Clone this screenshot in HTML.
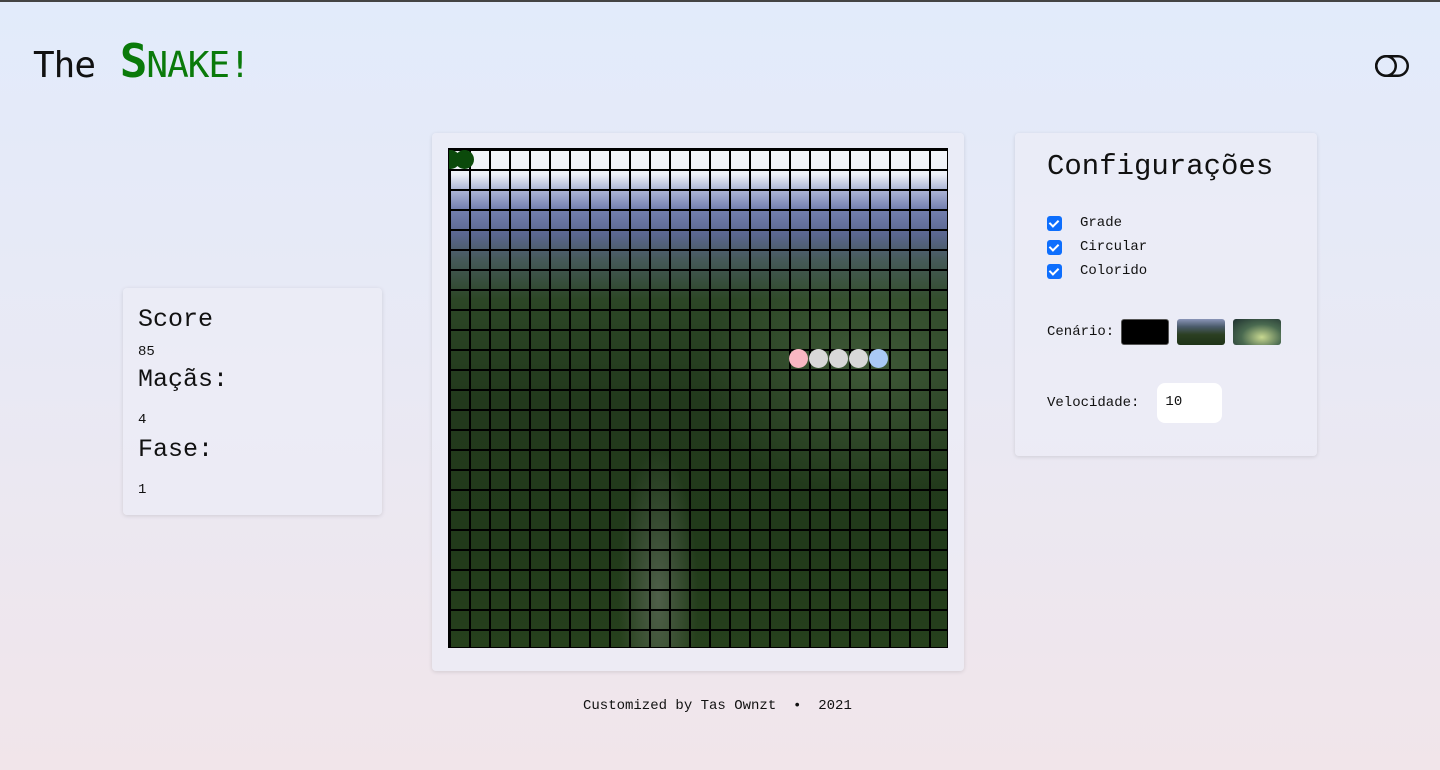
<!DOCTYPE html>
<html><head><meta charset="utf-8">
<style>
*{box-sizing:border-box;margin:0;padding:0}
html,body{width:1440px;height:770px;overflow:hidden}
body{background:linear-gradient(180deg,#e2ebfb 0%,#e9e9f4 50%,#f1e5ea 100%);font-family:"Liberation Mono","DejaVu Sans Mono",monospace;color:#111;position:relative;border-top:2px solid #444}
.title{position:absolute;left:33px;top:32px;font-size:36px;font-family:"DejaVu Sans Mono","Liberation Mono",monospace;letter-spacing:-1px}
.title .g{color:#0a7a0a;margin-left:4px}
.title .big{font-size:46px;font-weight:bold}
.toggle{position:absolute;left:1375px;top:53px}
.card{position:absolute;background:rgba(236,236,246,0.7);border-radius:4px;box-shadow:0 1px 4px rgba(0,0,0,0.12)}
.score{left:123px;top:286px;width:259px;height:227px;padding:16px 15px}
.score h2{font-size:25px;font-weight:normal;line-height:32px}
.score p{font-size:14px;line-height:20px;margin:6px 0 0}
.board{left:432px;top:131px;width:532px;height:538px}
.game{position:absolute;left:448px;top:146px;width:500px;height:500px;overflow:hidden;border:1px solid #000;
background:
radial-gradient(ellipse 35% 25% at 85% 45%,rgba(110,140,100,.35),transparent),
radial-gradient(ellipse 8% 30% at 42% 90%,rgba(160,160,160,.35),transparent),
linear-gradient(180deg,#f4f6fa 0,#eef1f8 25px,#b0b8d8 40px,#7480b0 60px,#5a6690 85px,#465a5a 110px,#2c4626 150px,#22391c 250px,#213a1a 400px,#26401c 500px)}
.game:after{content:"";position:absolute;inset:0;background:repeating-linear-gradient(90deg,#000 0 2px,transparent 2px 20px),repeating-linear-gradient(180deg,#000 0 2px,transparent 2px 20px)}
.dot{position:absolute;width:19px;height:19px;border-radius:50%;z-index:2}
.cfg{left:1015px;top:131px;width:302px;height:323px;padding:18px 32px}
.cfg h2{font-size:29px;font-weight:normal;margin-top:0;line-height:32px}
.chk{display:flex;align-items:center;font-size:14px;height:24px}
.box{width:15px;height:15px;background:#0d6efd;border-radius:3px;margin-right:18px;position:relative}
.box:after{content:"";position:absolute;left:4px;top:2px;width:4px;height:7px;border:solid #fff;border-width:0 2px 2px 0;transform:rotate(45deg)}
.row{display:flex;align-items:center;font-size:14px}
.th{width:48px;height:26px;border-radius:3px;margin-left:8px}
.vel{width:65px;height:40px;background:#fff;border-radius:8px;margin-left:14px;padding:11px 8px;font-size:14px}
.foot{position:absolute;left:583px;top:696px;font-size:14px;white-space:pre}
</style></head><body>
<div class="title">The <span class="g"><span class="big">S</span>NAKE!</span></div>
<svg class="toggle" width="34" height="22" viewBox="0 0 34 22"><rect x="1.25" y="1.25" width="31.5" height="19.5" rx="9.75" fill="none" stroke="#111" stroke-width="2.5"/><circle cx="11" cy="11" r="9.75" fill="none" stroke="#111" stroke-width="2.5"/></svg>
<div class="card score">
<h2>Score</h2><p>85</p>
<h2 style="margin-top:2px">Maçãs:</h2><p style="margin-top:14px">4</p>
<h2 style="margin-top:4px">Fase:</h2><p style="margin-top:14px">1</p>
</div>
<div class="card board"></div>
<div class="game">
<div class="dot" style="left:-8px;top:1px;background:#0b4a0b"></div>
<div class="dot" style="left:6px;top:1px;background:#0b4a0b"></div>
<div class="dot" style="left:340px;top:200px;background:#f8b7c2"></div>
<div class="dot" style="left:360px;top:200px;background:#d8d8d8"></div>
<div class="dot" style="left:380px;top:200px;background:#d8d8d8"></div>
<div class="dot" style="left:400px;top:200px;background:#d8d8d8"></div>
<div class="dot" style="left:420px;top:200px;background:#a9c9f5"></div>
</div>
<div class="card cfg">
<h2>Configurações</h2>
<div style="margin-top:28px">
<div class="chk"><span class="box"></span>Grade</div>
<div class="chk"><span class="box"></span>Circular</div>
<div class="chk"><span class="box"></span>Colorido</div>
</div>
<div class="row" style="margin-top:36px">Cenário:<span class="th" style="background:#000;margin-left:7px;border:1px solid #555"></span><span class="th" style="background:linear-gradient(180deg,#8a95b8 0,#4a5a6a 30%,#2b3f22 60%,#1f3318)"></span><span class="th" style="background:radial-gradient(ellipse at 60% 70%,#c8d890,#4a6a50 50%,#1f3030)"></span></div>
<div class="row" style="margin-top:38px">Velocidade:<span class="vel" style="margin-left:18px">10</span></div>
</div>
<div class="foot">Customized by Tas Ownzt  •  2021</div>
</body></html>
